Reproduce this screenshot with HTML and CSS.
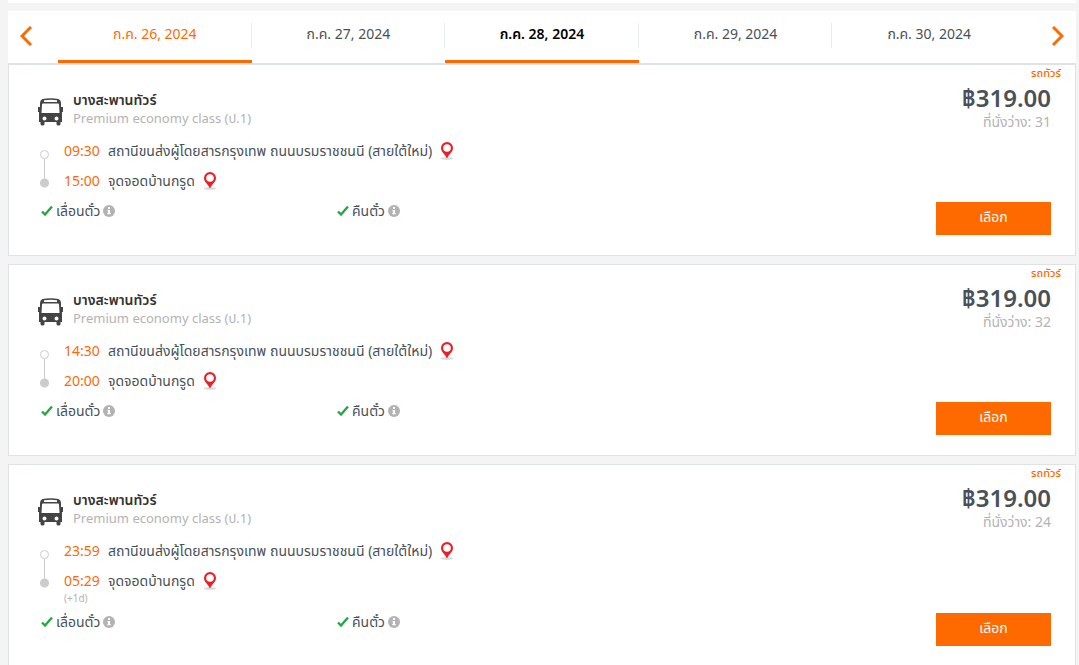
FILE: index.html
```html
<!DOCTYPE html>
<html lang="th">
<head>
<meta charset="UTF-8">
<meta name="viewport" content="width=device-width, initial-scale=1.0">
<title>เที่ยวรถ</title>
<link rel="stylesheet" href="styles.css">
</head>
<body>

<!-- shared icons -->
<svg class="sprite" aria-hidden="true">
    <symbol id="bus" viewBox="0 0 26 28">
        <path fill="#444" fill-rule="evenodd" d="M5 1Q13-.6 21 1Q23.500 2 23.500 5V9H25.500V14H24.500V24H23V26Q23 27.500 21 27.500Q19 27.500 19 26V24H7V26Q7 27.500 5 27.500Q3 27.500 3 26V24H1.500V14H.5V9H2.500V5Q2.500 2 5 1ZM6.500 2.300V3.900H19.500V2.300Q13 1.300 6.500 2.300ZM5.500 5.500Q4.500 5.500 4.500 6.500L4 15H22L21.500 6.500Q21.500 5.500 20.500 5.500ZM7 18.500A2 2 0 1 0 7 22.500A2 2 0 1 0 7 18.500ZM19 18.500A2 2 0 1 0 19 22.500A2 2 0 1 0 19 18.500Z"/>
    </symbol>
    <symbol id="pin" viewBox="0 0 14 18">
        <ellipse cx="7" cy="16.500" rx="6.500" ry="1.500" fill="#ddd"/>
        <path fill="#e8202a" fill-rule="evenodd" d="M7 0A6 6 0 0 1 13 6C13 10 9 12 7 16.500C5 12 1 10 1 6A6 6 0 0 1 7 0ZM7 2.200A3.800 3.800 0 1 0 7 9.800A3.800 3.800 0 1 0 7 2.200Z"/>
    </symbol>
    <symbol id="check" viewBox="0 0 12 12">
        <path d="M1 6.500L4 9.500L11 1.500" fill="none" stroke="#28a745" stroke-width="2.400"/>
    </symbol>
    <symbol id="info" viewBox="0 0 12 12">
        <circle cx="6" cy="6" r="6" fill="#b3b3b3"/>
        <path fill="#fff" d="M5 2H7V4H5ZM4.500 5H7V8H7.700V9.300H4.300V8H5V6.200H4.500Z"/>
    </symbol>
</svg>

<div class="search-bar"></div>

<nav class="dates">
    <button class="arrow" aria-label="ก่อนหน้า"><svg width="12" height="20" viewBox="0 0 12 20"><path d="M11 1L2 10L11 19"/></svg></button>
    <a href="#" class="date picked">ก.ค. 26, 2024</a>
    <a href="#" class="date">ก.ค. 27, 2024</a>
    <a href="#" class="date active">ก.ค. 28, 2024</a>
    <a href="#" class="date">ก.ค. 29, 2024</a>
    <a href="#" class="date">ก.ค. 30, 2024</a>
    <button class="arrow" aria-label="ถัดไป"><svg width="12" height="20" viewBox="0 0 12 20"><path d="M1 1L10 10L1 19"/></svg></button>
</nav>

<main>
    <article class="trip">
        <div class="info">
            <header class="operator">
                <svg class="bus"><use href="#bus"/></svg>
                <div>
                    <h2>บางสะพานทัวร์</h2>
                    <p>Premium economy class (ป.1)</p>
                </div>
            </header>
            <div class="route">
                <div class="line"></div>
                <ul>
                    <li><time>09:30</time><span>สถานีขนส่งผู้โดยสารกรุงเทพ ถนนบรมราชชนนี (สายใต้ใหม่)</span><svg class="pin"><use href="#pin"/></svg></li>
                    <li><time>15:00</time><span>จุดจอดบ้านกรูด</span><svg class="pin"><use href="#pin"/></svg></li>
                </ul>
            </div>
            <div class="options">
                <span><svg><use href="#check"/></svg>เลื่อนตั๋ว<svg><use href="#info"/></svg></span>
                <span><svg><use href="#check"/></svg>คืนตั๋ว<svg><use href="#info"/></svg></span>
            </div>
        </div>
        <div class="fare">
            <span class="type">รถทัวร์</span>
            <strong>฿319.00</strong>
            <span class="seats">ที่นั่งว่าง: 31</span>
            <button class="select">เลือก</button>
        </div>
    </article>

    <article class="trip">
        <div class="info">
            <header class="operator">
                <svg class="bus"><use href="#bus"/></svg>
                <div>
                    <h2>บางสะพานทัวร์</h2>
                    <p>Premium economy class (ป.1)</p>
                </div>
            </header>
            <div class="route">
                <div class="line"></div>
                <ul>
                    <li><time>14:30</time><span>สถานีขนส่งผู้โดยสารกรุงเทพ ถนนบรมราชชนนี (สายใต้ใหม่)</span><svg class="pin"><use href="#pin"/></svg></li>
                    <li><time>20:00</time><span>จุดจอดบ้านกรูด</span><svg class="pin"><use href="#pin"/></svg></li>
                </ul>
            </div>
            <div class="options">
                <span><svg><use href="#check"/></svg>เลื่อนตั๋ว<svg><use href="#info"/></svg></span>
                <span><svg><use href="#check"/></svg>คืนตั๋ว<svg><use href="#info"/></svg></span>
            </div>
        </div>
        <div class="fare">
            <span class="type">รถทัวร์</span>
            <strong>฿319.00</strong>
            <span class="seats">ที่นั่งว่าง: 32</span>
            <button class="select">เลือก</button>
        </div>
    </article>

    <article class="trip">
        <div class="info">
            <header class="operator">
                <svg class="bus"><use href="#bus"/></svg>
                <div>
                    <h2>บางสะพานทัวร์</h2>
                    <p>Premium economy class (ป.1)</p>
                </div>
            </header>
            <div class="route">
                <div class="line"></div>
                <ul>
                    <li><time>23:59</time><span>สถานีขนส่งผู้โดยสารกรุงเทพ ถนนบรมราชชนนี (สายใต้ใหม่)</span><svg class="pin"><use href="#pin"/></svg></li>
                    <li><time>05:29</time><span>จุดจอดบ้านกรูด</span><svg class="pin"><use href="#pin"/></svg></li>
                    <li class="next-day">(+1d)</li>
                </ul>
            </div>
            <div class="options">
                <span><svg><use href="#check"/></svg>เลื่อนตั๋ว<svg><use href="#info"/></svg></span>
                <span><svg><use href="#check"/></svg>คืนตั๋ว<svg><use href="#info"/></svg></span>
            </div>
        </div>
        <div class="fare">
            <span class="type">รถทัวร์</span>
            <strong>฿319.00</strong>
            <span class="seats">ที่นั่งว่าง: 24</span>
            <button class="select">เลือก</button>
        </div>
    </article>
</main>

</body>
</html>
```
FILE: styles.css
```css
*, *::before, *::after {
    box-sizing: border-box;
}
body {
    margin: 0 3px 0 8px;
    background-color: #f4f4f4;
    color: #495057;
    font-family: "Noto Sans", "Noto Sans Thai", sans-serif;
    font-size: 14px;
    line-height: 20px;
}
h2, p, ul {
    margin: 0;
    padding: 0;
    list-style: none;
}
button {
    border: none;
    font-family: inherit;
    font-size: 14px;
    cursor: pointer;
}
.sprite {
    display: none;
}
.search-bar {
    height: 3px;
    margin-bottom: 8px;
    background-color: #fff;
}
.dates {
    display: flex;
    height: 54px;
    background-color: #fff;
    border-bottom: 2px solid #dee2e6;
}
.arrow {
    width: 50px;
    padding: 0 12px 4px;
    background: none;
    text-align: left;
}
.arrow:last-child {
    text-align: right;
}
.arrow svg {
    display: inline-block;
    vertical-align: middle;
}
.arrow path {
    fill: none;
    stroke: #ff6a00;
    stroke-width: 3;
}
.date {
    flex: 1;
    padding-top: 13px;
    border-bottom: 3px solid transparent;
    color: #495057;
    text-align: center;
    text-decoration: none;
    background: linear-gradient(#e9ecef, #e9ecef) right 12px / 1px 25px no-repeat;
}
.date:nth-last-child(2) {
    background: none;
}
.picked, .active {
    border-bottom-color: #ff6a00;
}
.picked {
    color: #ff6a00;
}
.active {
    color: #000;
    font-weight: 600;
}
.trip {
    display: flex;
    justify-content: space-between;
    margin-bottom: 8px;
    padding-left: 28px;
    background-color: #fff;
    border: 1px solid #dee2e6;
}
.trip:first-child {
    border-top: none;
}
.info {
    flex: 1;
    padding: 26px 0 34px;
}
.operator {
    display: flex;
    gap: 9px;
    align-items: center;
}
.operator h2 {
    color: #333;
    font-size: 14px;
    font-weight: 600;
    line-height: 18px;
}
.operator p {
    color: #b3b3b3;
    font-size: 13px;
    line-height: 18px;
}
.bus {
    width: 27px;
    height: 28px;
    margin-top: 6px;
}
.route {
    display: flex;
    gap: 15px;
    padding: 9px 0 0 3px;
}
/* departure ring and arrival dot */
.line {
    display: flex;
    flex-direction: column;
    align-items: center;
    width: 9px;
    height: 38px;
    margin-top: 14px;
}
.line::before {
    content: "";
    width: 9px;
    height: 9px;
    border: 1px solid #ccc;
    border-radius: 50%;
    flex: none;
}
.line::after {
    content: "";
    width: 9px;
    height: 29px;
    background: radial-gradient(circle at 50% 24px, #ccc 4px, transparent 5px), linear-gradient(#ccc, #ccc) center top / 1px 22px no-repeat;
}
.route li {
    display: flex;
    align-items: center;
    height: 30px;
}
.route time {
    width: 44px;
    color: #ff6a00;
}
.route .next-day {
    height: 11px;
    margin-top: -4px;
    margin-bottom: 4px;
    color: #b3b3b3;
    font-size: 10px;
}
.pin {
    width: 14px;
    height: 18px;
    margin-left: 8px;
}
.options {
    display: grid;
    grid-template-columns: 296px 296px;
    padding: 5px 0 0 4px;
}
.options span {
    display: flex;
    align-items: center;
    gap: 3px;
}
.options svg {
    width: 12px;
    height: 12px;
}
.fare {
    display: flex;
    flex-direction: column;
    align-items: flex-end;
    padding: 0 24px 20px 0;
}
.type {
    margin-right: -10px;
    color: #ff6a00;
    font-size: 11px;
    font-weight: 500;
    line-height: 16px;
}
.fare strong {
    font-size: 24px;
    font-weight: 600;
    line-height: 34px;
}
.seats {
    color: #b3b3b3;
    line-height: 14px;
}
.select {
    width: 115px;
    height: 33px;
    margin-top: auto;
    padding-bottom: 3px;
    background-color: #ff6a00;
    color: #fff;
}
```
